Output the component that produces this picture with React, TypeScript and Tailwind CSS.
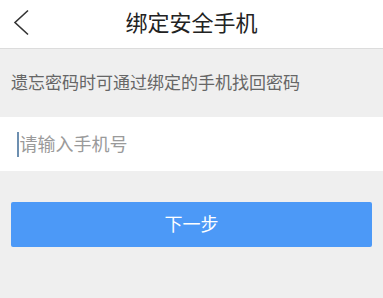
export default function App() {
  return (
    <div
      className="flex h-[298px] w-[383px] flex-col bg-[#efefef]"
      style={{ fontFamily: '"Noto Sans", "Noto Sans CJK SC", sans-serif' }}
    >
      {/* Header */}
      <div className="relative flex h-[49px] items-center justify-center border-b border-[#dcdcdc] bg-white pb-[5px]">
        <svg className="absolute left-[13px] top-[9px]" width="17" height="27" viewBox="0 0 17 27">
          <path d="M15 1.5 L2 13.5 L15 25.5" fill="none" stroke="#333" strokeWidth="1.6" />
        </svg>
        <span className="text-[22px] leading-none text-[#222]">绑定安全手机</span>
      </div>

      {/* Hint */}
      <div className="flex h-[68px] items-center px-[11px] text-[17px] text-[#666]">
        遗忘密码时可通过绑定的手机找回密码
      </div>

      {/* Input */}
      <div className="flex h-[54px] items-center bg-white pl-[17px]">
        <span className="mr-[1px] h-[25px] w-[1.5px] bg-[#6d8fb0]" />
        <span className="text-[18px] text-[#9a9a9a]">请输入手机号</span>
      </div>

      {/* Button */}
      <div className="px-[11px] pt-[31px]">
        <button className="flex h-[45px] w-full items-center justify-center rounded-[2px] bg-[#4c99f7] text-[18px] text-white">
          下一步
        </button>
      </div>
    </div>
  );
}
